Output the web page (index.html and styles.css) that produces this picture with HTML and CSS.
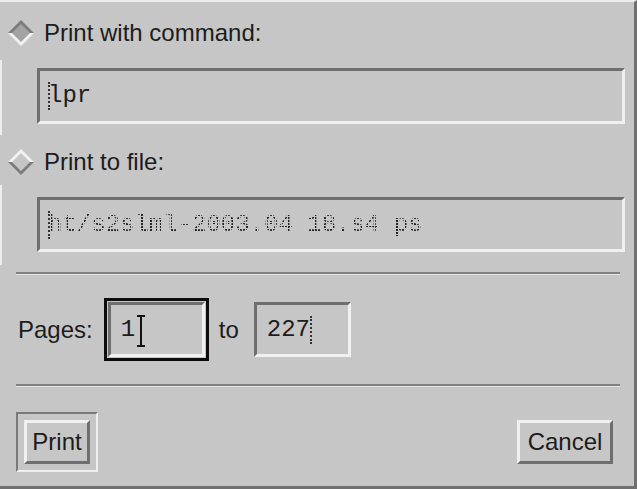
FILE: index.html
```html
<!DOCTYPE html>
<html lang="en">
<head>
    <meta charset="UTF-8">
    <title>Print</title>
    <link rel="stylesheet" href="styles.css">
</head>
<body>
    <div class="dialog">
        <label class="radio r1">
            <svg class="diamond" width="26" height="26" viewBox="0 0 26 26">
                <polygon points="0,13 13,0 26,13" fill="#7c7c7c"/>
                <polygon points="0,13 13,26 26,13" fill="#f2f2f2"/>
                <polygon points="4,13 13,4 22,13 13,22" fill="#a3a3a3"/>
            </svg>
            <span>Print with command:</span>
        </label>
        <div class="group g1">
            <div class="entry"><span class="caret"></span>lpr</div>
        </div>

        <label class="radio r2">
            <svg class="diamond" width="26" height="26" viewBox="0 0 26 26">
                <polygon points="0,13 13,0 26,13" fill="#f2f2f2"/>
                <polygon points="0,13 13,26 26,13" fill="#7c7c7c"/>
                <polygon points="4,13 13,4 22,13 13,22" fill="#c6c6c6"/>
            </svg>
            <span>Print to file:</span>
        </label>
        <div class="group g2">
            <div class="entry"><span class="caret"></span><span class="stipple">ht/s2slml-2003.04 18.s4 ps</span></div>
        </div>

        <div class="sep s1"></div>

        <div class="pages">
            <span>Pages:</span>
            <div class="focus">
                <div class="entry small">1</div>
                <svg class="ibeam" width="10" height="32" viewBox="0 0 10 32">
                    <path d="M1 1h8M1 31h8M5 1v30" stroke="#111" stroke-width="2" fill="none"/>
                </svg>
            </div>
            <span class="to">to</span>
            <div class="entry small">227<span class="caret"></span></div>
        </div>

        <div class="sep s2"></div>

        <div class="buttons">
            <div class="default">
                <button class="btn">Print</button>
            </div>
            <button class="btn cancel">Cancel</button>
        </div>
    </div>
</body>
</html>
```

FILE: styles.css
```css
body {
    margin: 0;
    background-color: #c6c6c6;
    font-family: 'Liberation Sans', Arial, sans-serif;
    color: #1c1c1c;
}

.dialog {
    width: 637px;
    height: 489px;
    box-sizing: border-box;
    background-color: #c6c6c6;
    border-top: 2px solid #ececec;
    border-right: 3px solid #707070;
    border-bottom: 3px solid #707070;
}

.radio {
    display: flex;
    align-items: center;
    height: 26px;
    padding-left: 8px;
    font-size: 24px;
    line-height: 26px;
}

.radio .diamond {
    margin-right: 10px;
}

.r1 {
    margin-top: 18px;
}

.r2 {
    margin-top: 14px;
}

.group {
    border-left: 2px solid #ededed;
    padding-left: 35px;
}

.g1 {
    margin-top: 14px;
    padding-top: 8px;
    padding-bottom: 11px;
}

.g2 {
    margin-top: 10px;
    padding-top: 12px;
    padding-bottom: 13px;
}

.entry {
    display: flex;
    align-items: center;
    box-sizing: border-box;
    width: 588px;
    height: 56px;
    padding-left: 8px;
    border-style: solid;
    border-width: 3px;
    border-color: #6e6e6e #f0f0f0 #f0f0f0 #6e6e6e;
    font-family: 'Liberation Mono', 'Courier New', monospace;
    font-size: 24px;
    line-height: 28px;
    color: #1c1c1c;
}

.g2 .entry {
    height: 55px;
}

.caret {
    display: inline-block;
    width: 0;
    height: 28px;
    border-left: 2px dotted #333;
    margin-right: -2px;
}

.stipple {
    color: transparent;
    background-image: radial-gradient(circle at 1px 1px, #222 0.9px, transparent 1.3px);
    background-size: 3px 3px;
    -webkit-background-clip: text;
    background-clip: text;
}

.sep {
    height: 0;
    margin: 0 14px 0 16px;
    border-top: 2px solid #808080;
    border-bottom: 1px solid #e6e6e6;
}

.s1 {
    margin-top: 7px;
}

.s2 {
    margin-top: 23px;
}

.pages {
    display: flex;
    align-items: center;
    margin-top: 23px;
    padding-left: 18px;
    font-size: 24px;
    line-height: 26px;
}

.focus {
    position: relative;
    margin-left: 11px;
    padding: 1px;
    border: 3px solid #0c0c0c;
}

.entry.small {
    width: 97px;
    height: 55px;
    padding-left: 10px;
}

.ibeam {
    position: absolute;
    left: 29px;
    top: 14px;
}

.to {
    margin: 0 15px 0 10px;
}

.buttons {
    display: flex;
    justify-content: space-between;
    align-items: center;
    margin-top: 25px;
    padding: 0 21px 0 16px;
}

.default {
    padding: 6px;
    border-style: solid;
    border-width: 2px;
    border-color: #7a7a7a #efefef #efefef #7a7a7a;
}

.btn {
    display: block;
    box-sizing: border-box;
    width: 66px;
    height: 44px;
    padding: 0;
    background-color: #c6c6c6;
    border-style: solid;
    border-width: 3px;
    border-color: #f0f0f0 #6e6e6e #6e6e6e #f0f0f0;
    font-family: 'Liberation Sans', Arial, sans-serif;
    font-size: 24px;
    color: #1c1c1c;
}

.cancel {
    width: 96px;
}
```
